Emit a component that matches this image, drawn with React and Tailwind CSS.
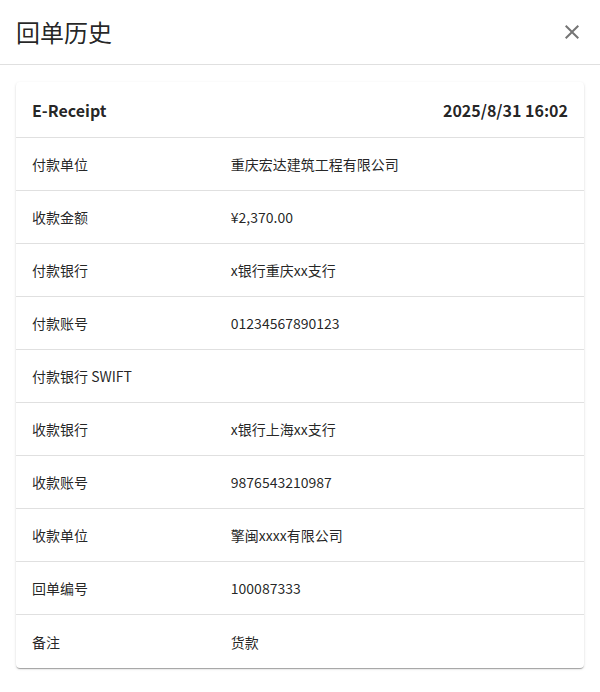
import React from 'react';

const rows = [
  ['付款单位', '重庆宏达建筑工程有限公司'],
  ['收款金额', '¥2,370.00'],
  ['付款银行', 'x银行重庆xx支行'],
  ['付款账号', '01234567890123'],
  ['付款银行 SWIFT', ''],
  ['收款银行', 'x银行上海xx支行'],
  ['收款账号', '9876543210987'],
  ['收款单位', '擎闽xxxx有限公司'],
  ['回单编号', '100087333'],
  ['备注', '货款'],
];

function CloseIcon() {
  return (
    <svg viewBox="0 0 24 24" className="h-6 w-6 fill-[#757575]">
      <path d="M19 6.41 17.59 5 12 10.59 6.41 5 5 6.41 10.59 12 5 17.59 6.41 19 12 13.41 17.59 19 19 17.59 13.41 12z" />
    </svg>
  );
}

export default function App() {
  return (
    <div className="h-[692px] w-[600px] bg-white text-[rgba(0,0,0,0.87)] font-['Noto_Sans_CJK_SC','Noto_Sans',sans-serif]">
      <div className="flex h-[65px] items-center justify-between border-b border-[#e0e0e0] pl-4 pr-4">
        <h2 className="text-2xl leading-none">回单历史</h2>
        <button type="button" className="-mr-1 flex h-8 w-8 items-center justify-center">
          <CloseIcon />
        </button>
      </div>
      <div className="px-4 pt-[17px]">
        <div className="overflow-hidden rounded bg-white shadow-[0_2px_1px_-1px_rgba(0,0,0,0.2),0_1px_1px_0_rgba(0,0,0,0.14),0_1px_3px_0_rgba(0,0,0,0.12)]">
          <div className="flex h-[56px] items-center justify-between border-b border-[#e0e0e0] px-4 text-base font-bold">
            <span>E-Receipt</span>
            <span>2025/8/31 16:02</span>
          </div>
          {rows.map(([label, value], i) => (
            <div
              key={label}
              className={`flex h-[53px] items-center text-sm ${i < rows.length - 1 ? 'border-b border-[#e0e0e0]' : ''}`}
            >
              <div className="w-[35%] px-4">{label}</div>
              <div className="flex-1 px-4">{value}</div>
            </div>
          ))}
        </div>
      </div>
    </div>
  );
}
